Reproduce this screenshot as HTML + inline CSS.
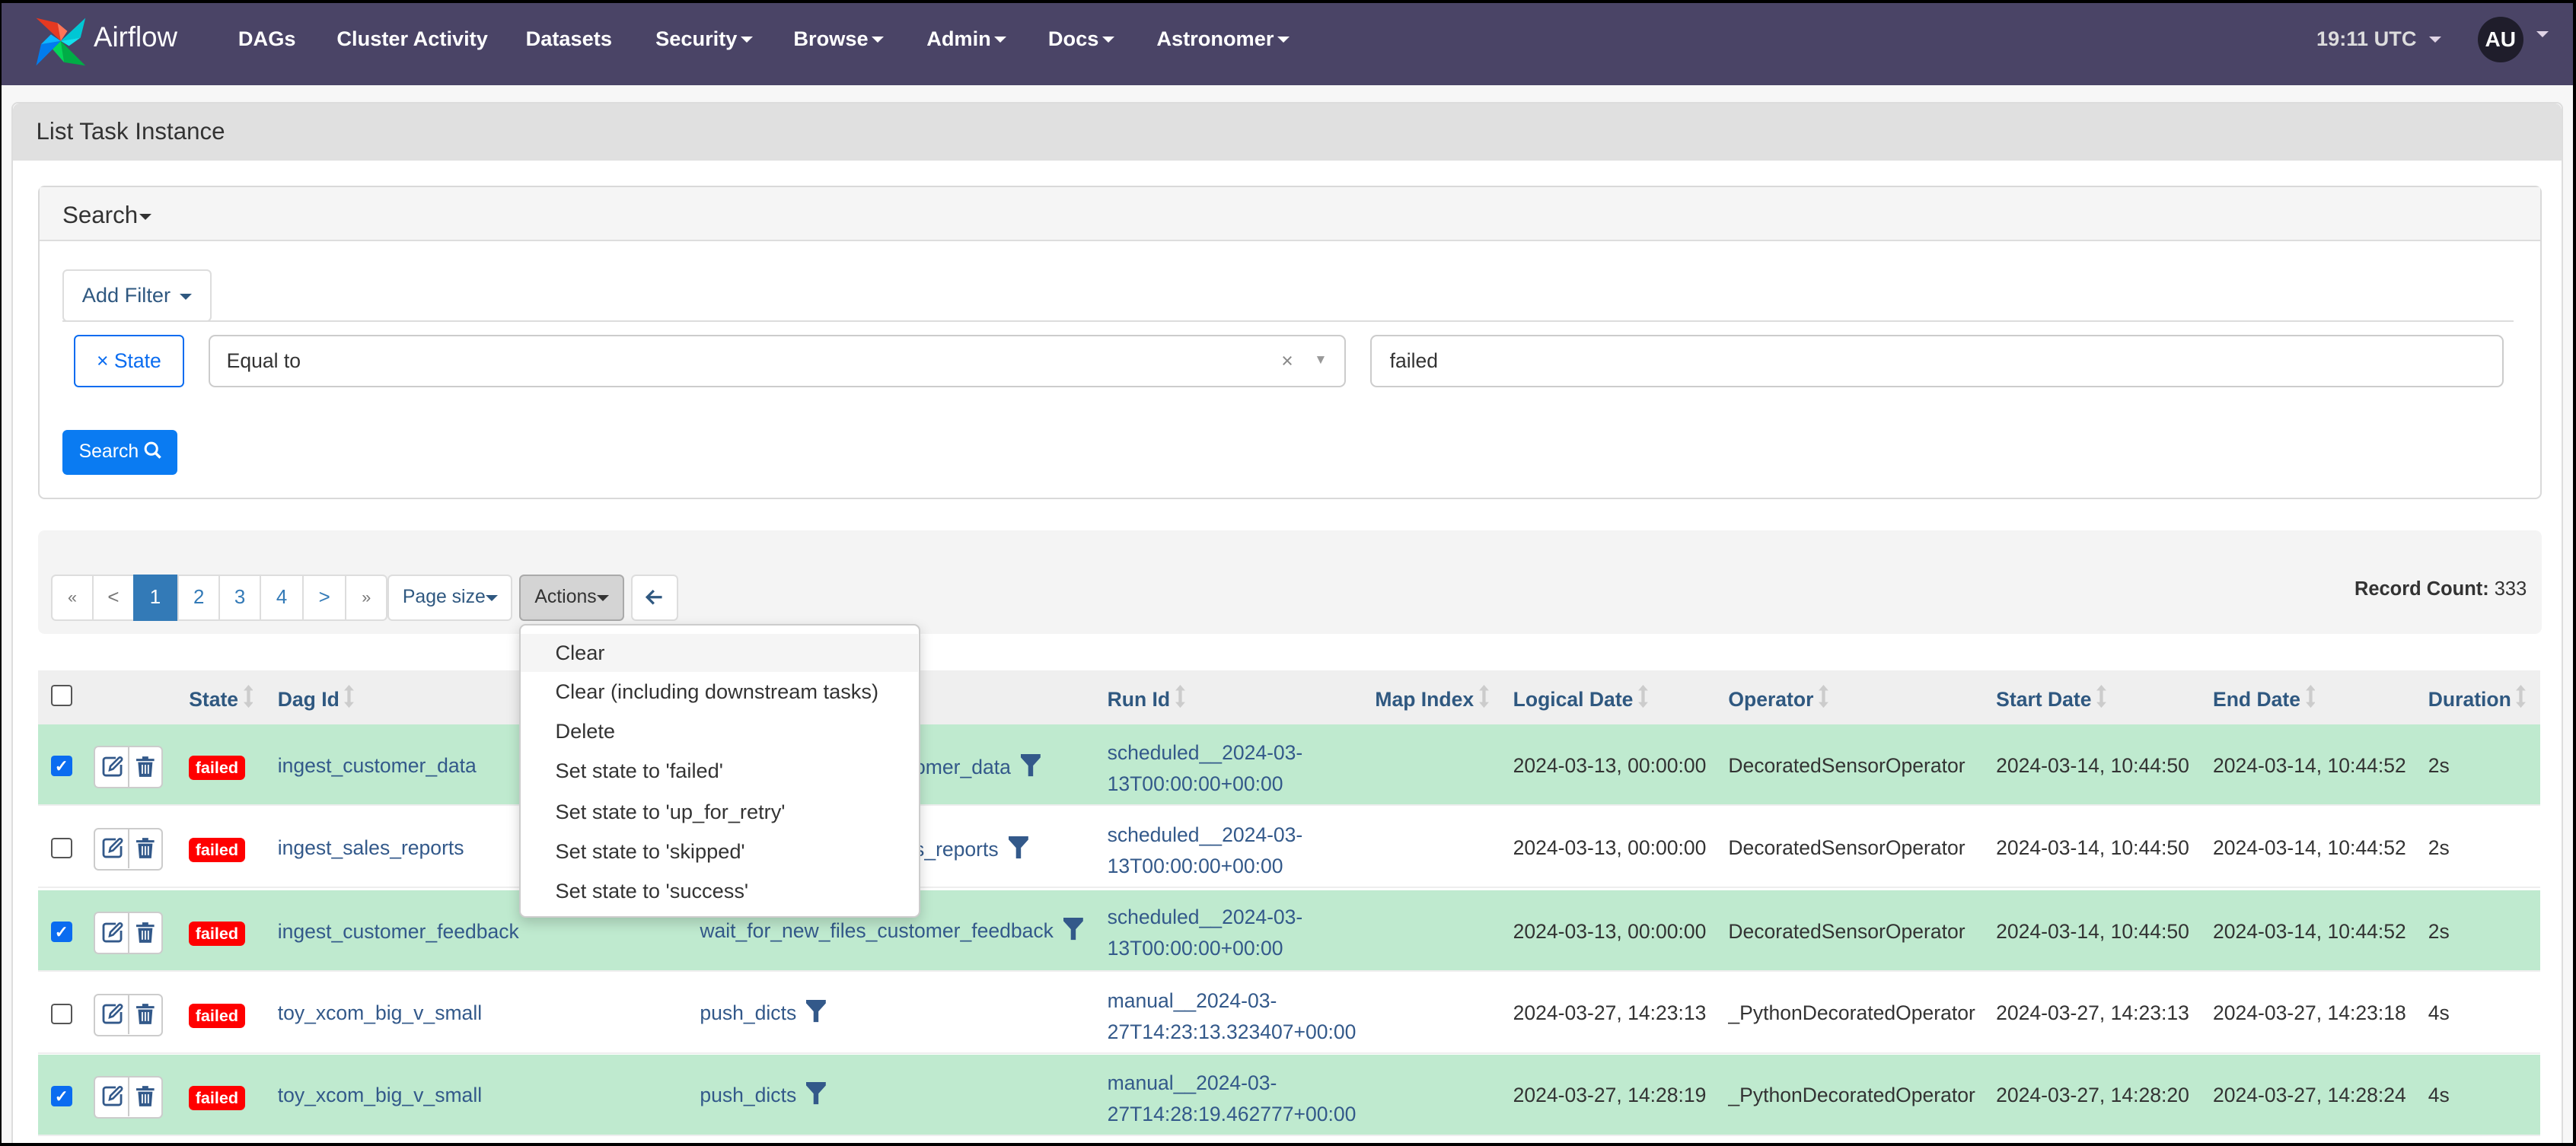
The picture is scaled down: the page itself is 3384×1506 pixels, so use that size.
<!DOCTYPE html>
<html><head><meta charset="utf-8">
<style>
html,body{margin:0;padding:0;background:#000;}
body{width:3384px;height:1506px;overflow:hidden;}
#w{zoom:2.15816;width:1568px;height:698px;position:relative;overflow:hidden;background:#fff;font-family:"Liberation Sans",Arial,sans-serif;color:#333;font-size:12.3px;}
.a{position:absolute;white-space:nowrap;}
.nav{left:0;top:0;width:1568px;height:52px;background:#4a4466;border-top:2px solid #000;box-sizing:border-box;}
.ni{position:absolute;top:16px;color:#fff;font-weight:bold;font-size:12.6px;}
.car{display:inline-block;width:0;height:0;border-left:4px solid transparent;border-right:4px solid transparent;border-top:4px solid currentColor;vertical-align:middle;margin-left:2px;}
.lnk{color:#33598a;}
.hd{color:#2f5880;font-weight:bold;}
.sort{display:inline-block;vertical-align:-1px;margin-left:3px;}
.row{position:absolute;left:23px;width:1523px;height:49px;border-bottom:1px solid #eee;}
.g{background:#bfeacf;}
.cb{position:absolute;left:31px;width:11px;height:11px;border:1px solid #555;border-radius:2px;background:#fff;}
.cbc{background:#0a6cf0;border-color:#0a6cf0;color:#fff;font-size:10px;line-height:11px;text-align:center;font-weight:bold;}
.btns{position:absolute;left:57px;width:42px;height:26px;border:1px solid #ccc;border-radius:3px;background:#fff;box-sizing:border-box;}
.btns:after{content:"";position:absolute;left:20px;top:0;width:1px;height:24px;background:#ccc;}
.btns svg{position:absolute;top:5px;}
.badge{position:absolute;left:115px;width:34px;height:15px;background:#f00;color:#fff;font-weight:bold;font-size:10px;line-height:15px;text-align:center;border-radius:3px;}
.pg{position:absolute;top:350px;height:28px;border:1px solid #ddd;background:#fff;box-sizing:border-box;text-align:center;line-height:26px;font-size:12px;color:#337ab7;}
.dd{position:absolute;left:338px;font-size:12.6px;color:#333;}
.fn{display:inline-block;vertical-align:-2px;margin-left:6px;}
</style></head><body><div id="w">
<svg width="0" height="0" style="position:absolute"><defs>
<symbol id="srt" viewBox="0 0 6 14"><path d="M3 0L6 3.5H4V10.5H6L3 14L0 10.5H2V3.5H0Z" fill="#ccc"/></symbol>
<symbol id="fun" viewBox="0 0 12 14"><path d="M0 0H12V2L7.5 7V13.5H4.5V7L0 2Z" fill="#33598a"/></symbol>
<symbol id="ed" viewBox="0 0 14 14"><path d="M9 1.5H2.5A1.5 1.5 0 0 0 1 3v8.5A1.5 1.5 0 0 0 2.5 13H11a1.5 1.5 0 0 0 1.5-1.5V6" fill="none" stroke="#33598a" stroke-width="1.4"/><path d="M5 9.5L5.5 7L11 1.5a1.2 1.2 0 0 1 1.7 1.7L7.2 8.8Z" fill="none" stroke="#33598a" stroke-width="1.3"/></symbol>
<symbol id="tr" viewBox="0 0 12 14"><path d="M0 2H12V3.5H0ZM4 0.5H8V2H4Z" fill="#33598a"/><path d="M1.2 4.3H10.8L10 14H2Z" fill="#33598a"/><path d="M4 6V12M6 6V12M8 6V12" stroke="#fff" stroke-width="0.9"/></symbol>
</defs></svg>
<div class="a nav"></div>
<svg class="a" style="left:19px;top:7px" width="36" height="36" viewBox="0 0 36 36">
<path d="M18 18 L3 4 L16 7 Z" fill="#e43921"/><path d="M18 18 L16 7 L22 12Z" fill="#ff7557"/>
<path d="M18 18 L33 4 L30 16 Z" fill="#00c7d4"/><path d="M18 18 L30 16 L23 21Z" fill="#11e1ee"/>
<path d="M18 18 L33 33 L20 31 Z" fill="#00ad46"/><path d="M18 18 L20 31 L13 23Z" fill="#04d659"/>
<path d="M18 18 L3 33 L6 20 Z" fill="#017cee"/><path d="M18 18 L6 20 L12 14Z" fill="#0cb6ff"/>
</svg>
<div class="a" style="left:57px;top:13px;color:#fff;font-size:17px;">Airflow</div>
<div class="ni" style="left:145px">DAGs</div>
<div class="ni" style="left:205px">Cluster Activity</div>
<div class="ni" style="left:320px">Datasets</div>
<div class="ni" style="left:399px">Security<span class="car"></span></div>
<div class="ni" style="left:483px">Browse<span class="car"></span></div>
<div class="ni" style="left:564px">Admin<span class="car"></span></div>
<div class="ni" style="left:638px">Docs<span class="car"></span></div>
<div class="ni" style="left:704px">Astronomer<span class="car"></span></div>
<div class="ni" style="left:1410px;color:#ddd">19:11 UTC <span class="car" style="color:#e0d4e6;margin-left:4px"></span></div>
<div class="a" style="left:1508px;top:10px;width:28px;height:28px;border-radius:50%;background:#1f1d2b;color:#fff;font-weight:bold;font-size:13px;line-height:28px;text-align:center;">AU</div>
<div class="a" style="left:1542px;top:14px;color:#e0d4e6;font-size:12px"><span class="car"></span></div>
<!-- page bg -->
<div class="a" style="left:0;top:52px;width:1568px;height:646px;background:#f7f7f7"></div>
<div class="a" style="left:7px;top:62px;width:1553px;height:640px;background:#fff;border:1px solid #ddd;border-radius:4px;box-sizing:border-box"></div>
<div class="a" style="left:8px;top:63px;width:1551px;height:35px;background:#e0e0e0;border-radius:4px 4px 0 0"></div>
<div class="a" style="left:22px;top:72px;font-size:14.5px;color:#333">List Task Instance</div>
<!-- search panel -->
<div class="a" style="left:23px;top:113px;width:1524px;height:191px;border:1px solid #d9d9d9;border-radius:4px;box-sizing:border-box;background:#fff"></div>
<div class="a" style="left:24px;top:114px;width:1522px;height:32px;background:#f5f5f5;border-bottom:1px solid #ddd"></div>
<div class="a" style="left:38px;top:123px;font-size:14.5px">Search<span class="car" style="margin-left:1px"></span></div>
<div class="a" style="left:38px;top:164px;width:91px;height:32px;border:1px solid #ddd;border-radius:3px;box-sizing:border-box;color:#2f5880;font-size:12.6px;line-height:30px;padding-left:11px;">Add Filter <span class="car"></span></div>
<div class="a" style="left:38px;top:195px;width:1492px;height:1px;background:#ddd"></div>
<div class="a" style="left:45px;top:204px;width:67px;height:32px;border:1px solid #0a6cf0;border-radius:3px;box-sizing:border-box;color:#0a6cf0;line-height:30px;text-align:center">× State</div>
<div class="a" style="left:127px;top:204px;width:692px;height:32px;border:1px solid #ccc;border-radius:4px;box-sizing:border-box;line-height:30px;padding-left:10px">Equal to<span style="position:absolute;left:652px;color:#888">×</span><span style="position:absolute;left:672px;top:-1px;color:#999;font-size:8px">▼</span></div>
<div class="a" style="left:834px;top:204px;width:690px;height:32px;border:1px solid #ccc;border-radius:4px;box-sizing:border-box;line-height:30px;padding-left:11px">failed</div>
<div class="a" style="left:38px;top:262px;width:70px;height:27px;background:#0a7bf2;border-radius:3px;color:#fff;font-size:11.5px;line-height:27px;padding-left:10px;box-sizing:border-box">Search <svg width="11" height="11" viewBox="0 0 11 11" style="vertical-align:-1px"><circle cx="4.5" cy="4.5" r="3.5" fill="none" stroke="#fff" stroke-width="1.4"/><path d="M7 7l3 3" stroke="#fff" stroke-width="1.6"/></svg></div>
<!-- well -->
<div class="a" style="left:23px;top:323px;width:1524px;height:63px;background:#f4f4f4;border-radius:4px"></div>
<div class="pg" style="left:31px;width:26px;font-size:10px;color:#777;border-radius:3px 0 0 3px">«</div>
<div class="pg" style="left:56px;width:26px;color:#777">&lt;</div>
<div class="pg" style="left:81px;width:27px;background:#337ab7;border-color:#337ab7;color:#fff">1</div>
<div class="pg" style="left:108px;width:26px">2</div>
<div class="pg" style="left:133px;width:26px">3</div>
<div class="pg" style="left:158px;width:27px">4</div>
<div class="pg" style="left:184px;width:27px">&gt;</div>
<div class="pg" style="left:210px;width:26px;font-size:10px;color:#777;border-radius:0 3px 3px 0">»</div>
<div class="pg" style="left:236px;width:76px;color:#2f5880;border-radius:3px;font-size:11.5px">Page size<span class="car" style="margin-left:0"></span></div>
<div class="pg" style="left:316px;width:64px;background:#d4d4d4;border-color:#aaa;color:#333;border-radius:3px;font-size:11.5px">Actions<span class="car" style="margin-left:0"></span></div>
<div class="pg" style="left:384px;width:29px;border-radius:3px"><svg width="11" height="10" viewBox="0 0 11 10" style="vertical-align:-1px"><path d="M10 5H1.5M5 1L1 5L5 9" fill="none" stroke="#2f5880" stroke-width="1.5"/></svg></div>
<div class="a" style="right:30px;top:352px;font-size:11.8px"><b>Record Count:</b> 333</div>
<!-- table header -->
<div class="a" style="left:23px;top:408px;width:1523px;height:33px;background:#efefef"></div>
<div class="cb" style="top:417px"></div>
<div class="a hd" style="left:115px;top:417px">State<svg class="sort" width="6" height="14"><use href="#srt"/></svg></div>
<div class="a hd" style="left:169px;top:417px">Dag Id<svg class="sort" width="6" height="14"><use href="#srt"/></svg></div>
<div class="a hd" style="left:674px;top:417px">Run Id<svg class="sort" width="6" height="14"><use href="#srt"/></svg></div>
<div class="a hd" style="left:837px;top:417px">Map Index<svg class="sort" width="6" height="14"><use href="#srt"/></svg></div>
<div class="a hd" style="left:921px;top:417px">Logical Date<svg class="sort" width="6" height="14"><use href="#srt"/></svg></div>
<div class="a hd" style="left:1052px;top:417px">Operator<svg class="sort" width="6" height="14"><use href="#srt"/></svg></div>
<div class="a hd" style="left:1215px;top:417px">Start Date<svg class="sort" width="6" height="14"><use href="#srt"/></svg></div>
<div class="a hd" style="left:1347px;top:417px">End Date<svg class="sort" width="6" height="14"><use href="#srt"/></svg></div>
<div class="a hd" style="left:1478px;top:417px">Duration<svg class="sort" width="6" height="14"><use href="#srt"/></svg></div>
<!-- rows -->
<div class="row g" style="top:441px"></div>
<div class="row" style="top:491px"></div>
<div class="row g" style="top:542px"></div>
<div class="row" style="top:592px"></div>
<div class="row g" style="top:642px"></div>

<div class="cb cbc" style="top:460px">✓</div><div class="btns" style="top:454px"><svg style="left:4px" width="13" height="13"><use href="#ed"/></svg><svg style="left:25px" width="11" height="13"><use href="#tr"/></svg></div>
<div class="badge" style="top:460px">failed</div>
<div class="a lnk" style="left:169px;top:459px">ingest_customer_data</div>
<div class="a lnk" style="left:426px;top:459px">wait_for_new_files_customer_data<svg class="fn" width="12" height="14"><use href="#fun"/></svg></div>
<div class="a lnk" style="left:674px;top:449px;line-height:19px">scheduled__2024-03-<br>13T00:00:00+00:00</div>
<div class="a" style="left:921px;top:459px">2024-03-13, 00:00:00</div><div class="a" style="left:1052px;top:459px">DecoratedSensorOperator</div><div class="a" style="left:1215px;top:459px">2024-03-14, 10:44:50</div><div class="a" style="left:1347px;top:459px">2024-03-14, 10:44:52</div><div class="a" style="left:1478px;top:459px">2s</div>

<div class="cb" style="top:510px"></div><div class="btns" style="top:504px"><svg style="left:4px" width="13" height="13"><use href="#ed"/></svg><svg style="left:25px" width="11" height="13"><use href="#tr"/></svg></div>
<div class="badge" style="top:510px">failed</div>
<div class="a lnk" style="left:169px;top:509px">ingest_sales_reports</div>
<div class="a lnk" style="left:426px;top:509px">wait_for_new_files_sales_reports<svg class="fn" width="12" height="14"><use href="#fun"/></svg></div>
<div class="a lnk" style="left:674px;top:499px;line-height:19px">scheduled__2024-03-<br>13T00:00:00+00:00</div>
<div class="a" style="left:921px;top:509px">2024-03-13, 00:00:00</div><div class="a" style="left:1052px;top:509px">DecoratedSensorOperator</div><div class="a" style="left:1215px;top:509px">2024-03-14, 10:44:50</div><div class="a" style="left:1347px;top:509px">2024-03-14, 10:44:52</div><div class="a" style="left:1478px;top:509px">2s</div>

<div class="cb cbc" style="top:561px">✓</div><div class="btns" style="top:555px"><svg style="left:4px" width="13" height="13"><use href="#ed"/></svg><svg style="left:25px" width="11" height="13"><use href="#tr"/></svg></div>
<div class="badge" style="top:561px">failed</div>
<div class="a lnk" style="left:169px;top:560px">ingest_customer_feedback</div>
<div class="a lnk" style="left:426px;top:559px">wait_for_new_files_customer_feedback<svg class="fn" width="12" height="14"><use href="#fun"/></svg></div>
<div class="a lnk" style="left:674px;top:549px;line-height:19px">scheduled__2024-03-<br>13T00:00:00+00:00</div>
<div class="a" style="left:921px;top:560px">2024-03-13, 00:00:00</div><div class="a" style="left:1052px;top:560px">DecoratedSensorOperator</div><div class="a" style="left:1215px;top:560px">2024-03-14, 10:44:50</div><div class="a" style="left:1347px;top:560px">2024-03-14, 10:44:52</div><div class="a" style="left:1478px;top:560px">2s</div>

<div class="cb" style="top:611px"></div><div class="btns" style="top:605px"><svg style="left:4px" width="13" height="13"><use href="#ed"/></svg><svg style="left:25px" width="11" height="13"><use href="#tr"/></svg></div>
<div class="badge" style="top:611px">failed</div>
<div class="a lnk" style="left:169px;top:610px">toy_xcom_big_v_small</div>
<div class="a lnk" style="left:426px;top:609px">push_dicts<svg class="fn" width="12" height="14"><use href="#fun"/></svg></div>
<div class="a lnk" style="left:674px;top:600px;line-height:19px">manual__2024-03-<br>27T14:23:13.323407+00:00</div>
<div class="a" style="left:921px;top:610px">2024-03-27, 14:23:13</div><div class="a" style="left:1052px;top:610px">_PythonDecoratedOperator</div><div class="a" style="left:1215px;top:610px">2024-03-27, 14:23:13</div><div class="a" style="left:1347px;top:610px">2024-03-27, 14:23:18</div><div class="a" style="left:1478px;top:610px">4s</div>

<div class="cb cbc" style="top:661px">✓</div><div class="btns" style="top:655px"><svg style="left:4px" width="13" height="13"><use href="#ed"/></svg><svg style="left:25px" width="11" height="13"><use href="#tr"/></svg></div>
<div class="badge" style="top:661px">failed</div>
<div class="a lnk" style="left:169px;top:660px">toy_xcom_big_v_small</div>
<div class="a lnk" style="left:426px;top:659px">push_dicts<svg class="fn" width="12" height="14"><use href="#fun"/></svg></div>
<div class="a lnk" style="left:674px;top:650px;line-height:19px">manual__2024-03-<br>27T14:28:19.462777+00:00</div>
<div class="a" style="left:921px;top:660px">2024-03-27, 14:28:19</div><div class="a" style="left:1052px;top:660px">_PythonDecoratedOperator</div><div class="a" style="left:1215px;top:660px">2024-03-27, 14:28:20</div><div class="a" style="left:1347px;top:660px">2024-03-27, 14:28:24</div><div class="a" style="left:1478px;top:660px">4s</div>

<!-- dropdown -->
<div class="a" style="left:316px;top:380px;width:244px;height:179px;background:#fff;border:1px solid #ccc;border-radius:4px;box-shadow:0 3px 8px rgba(0,0,0,.18);box-sizing:border-box"></div>
<div class="a" style="left:317px;top:386px;width:242px;height:23px;background:#f5f5f5"></div>
<div class="dd a" style="top:390px">Clear</div>
<div class="dd a" style="top:414px">Clear (including downstream tasks)</div>
<div class="dd a" style="top:438px">Delete</div>
<div class="dd a" style="top:462px">Set state to 'failed'</div>
<div class="dd a" style="top:487px">Set state to 'up_for_retry'</div>
<div class="dd a" style="top:511px">Set state to 'skipped'</div>
<div class="dd a" style="top:535px">Set state to 'success'</div>
<!-- black frame -->
<div class="a" style="left:0;top:0;width:1568px;height:698px;border:1px solid #000;border-right-width:2px;border-bottom-width:2px;box-sizing:border-box;pointer-events:none"></div>
</div></body></html>
